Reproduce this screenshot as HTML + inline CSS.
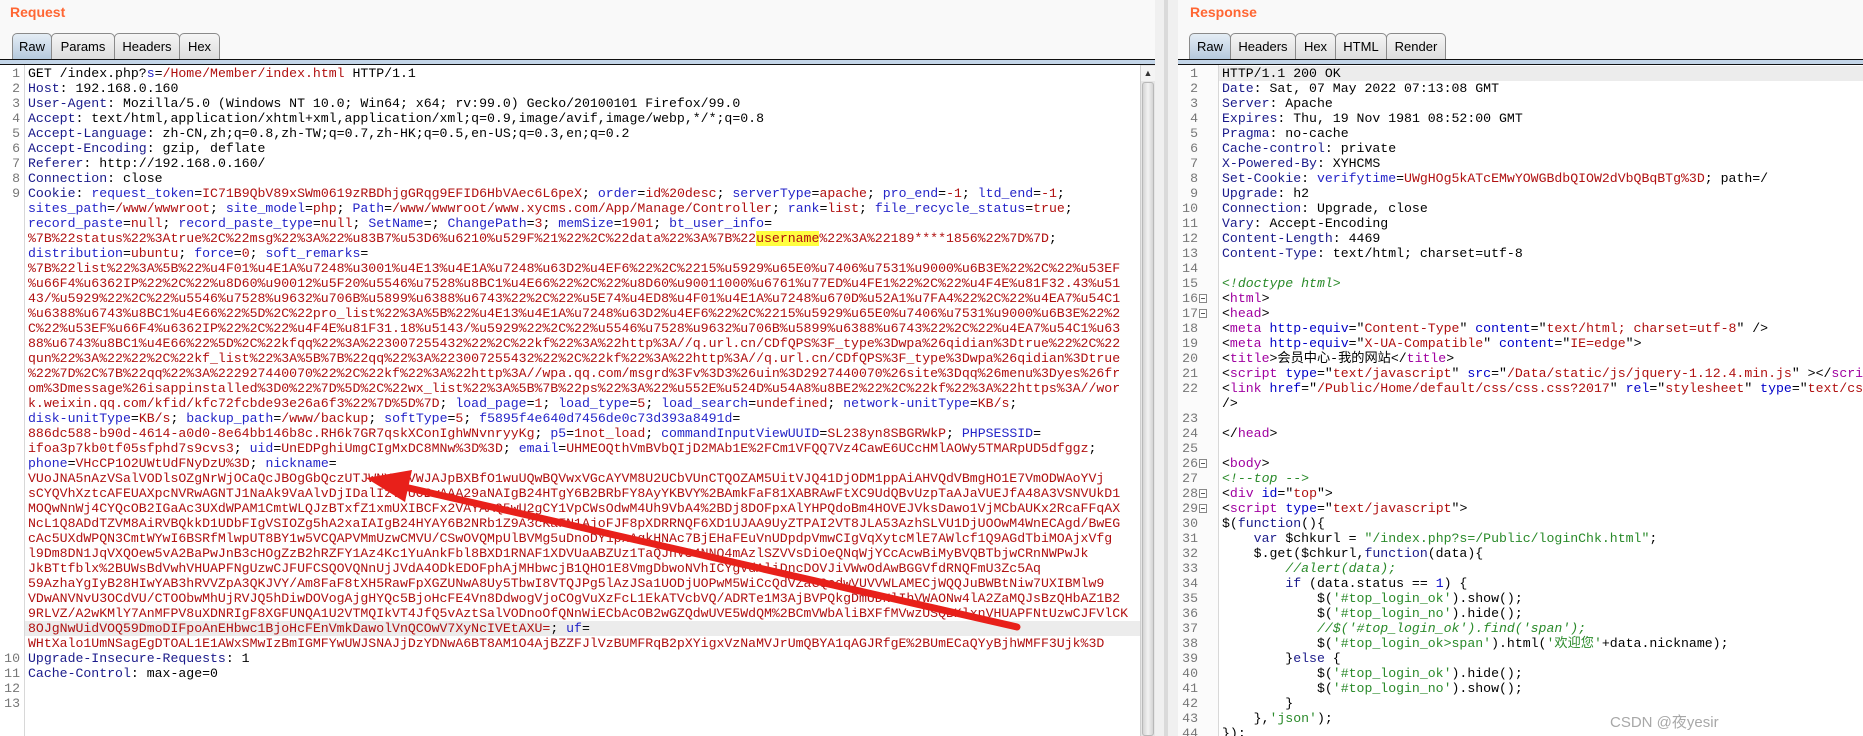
<!DOCTYPE html>
<html><head><meta charset="utf-8">
<style>
*{box-sizing:border-box}
body{margin:0;width:1863px;height:736px;overflow:hidden;background:#f9f9f9;position:relative;font-family:"Liberation Mono","Noto Sans CJK SC",monospace}
.title{position:absolute;top:4px;font:bold 14px "Liberation Sans",sans-serif;color:#ff6633}
.tab{position:absolute;top:33px;height:27px;border:1px solid #8a8a8a;border-bottom:none;border-radius:5px 5px 0 0;background:linear-gradient(#f6f6f6,#dcdcdc);font:13px "Liberation Sans",sans-serif;color:#000;text-align:center;line-height:25px}
.tab.a{background:linear-gradient(#e4edf5,#b4c8dc)}
.bar{position:absolute;top:59px;height:6px;border-top:1.5px solid #111;border-bottom:1px solid #111;background:#c3d5e8}
.ed{position:absolute;top:65px;bottom:0;background:#fff;overflow:hidden}
.r{position:absolute;height:15px;line-height:15px;font-size:13.2px;white-space:pre;color:#000}
.n{position:absolute;height:15px;line-height:15px;font-size:13.2px;color:#777;text-align:right}
.k{color:#1a1a8a}.c{color:#2525c8}.v{color:#b01010}.t{color:#a000a0}.g{color:#2a8a2a;font-style:italic}.s{color:#2a8a2a}.b{color:#0000c8}
.hl{background:#ececec}
.fold{position:absolute;width:8px;height:9px;border:1px solid #888;background:#fff}
.fold:after{content:"";position:absolute;left:1px;top:3px;width:4px;height:1px;background:#555}
</style></head><body>
<div class="title" style="left:10px">Request</div>
<div class="tab a" style="left:12px;width:40px">Raw</div>
<div class="tab" style="left:51px;width:64px">Params</div>
<div class="tab" style="left:114px;width:66px">Headers</div>
<div class="tab" style="left:179px;width:41px">Hex</div>
<div class="bar" style="left:0;width:1155px"></div>

<div class="title" style="left:1190px">Response</div>
<div class="tab a" style="left:1189px;width:42px">Raw</div>
<div class="tab" style="left:1230px;width:66px">Headers</div>
<div class="tab" style="left:1295px;width:41px">Hex</div>
<div class="tab" style="left:1335px;width:52px">HTML</div>
<div class="tab" style="left:1386px;width:60px">Render</div>
<div class="bar" style="left:1178px;width:685px"></div>

<div style="position:absolute;left:1155px;top:0;width:23px;height:736px;background:#f0f0f0"></div>
<div style="position:absolute;left:1164px;top:0;width:4px;height:736px;background:#dadada"></div>

<!-- Request editor -->
<div class="ed" style="left:0;width:1140px">
<div style="position:absolute;left:24px;top:0;width:1px;height:700px;background:#d8d8d8"></div>
<div class="hl" style="position:absolute;left:25px;top:556px;width:1115px;height:15px"></div>
<div class="n" style="left:0;width:20px;top:1px">1</div>
<div class="r" style="left:28px;top:1px">GET /index.php?<span class="c">s</span>=<span class="v">/Home/Member/index.html</span> HTTP/1.1</div>
<div class="n" style="left:0;width:20px;top:16px">2</div>
<div class="r" style="left:28px;top:16px"><span class="k">Host</span>: 192.168.0.160</div>
<div class="n" style="left:0;width:20px;top:31px">3</div>
<div class="r" style="left:28px;top:31px"><span class="k">User-Agent</span>: Mozilla/5.0 (Windows NT 10.0; Win64; x64; rv:99.0) Gecko/20100101 Firefox/99.0</div>
<div class="n" style="left:0;width:20px;top:46px">4</div>
<div class="r" style="left:28px;top:46px"><span class="k">Accept</span>: text/html,application/xhtml+xml,application/xml;q=0.9,image/avif,image/webp,*/*;q=0.8</div>
<div class="n" style="left:0;width:20px;top:61px">5</div>
<div class="r" style="left:28px;top:61px"><span class="k">Accept-Language</span>: zh-CN,zh;q=0.8,zh-TW;q=0.7,zh-HK;q=0.5,en-US;q=0.3,en;q=0.2</div>
<div class="n" style="left:0;width:20px;top:76px">6</div>
<div class="r" style="left:28px;top:76px"><span class="k">Accept-Encoding</span>: gzip, deflate</div>
<div class="n" style="left:0;width:20px;top:91px">7</div>
<div class="r" style="left:28px;top:91px"><span class="k">Referer</span>: http://192.168.0.160/</div>
<div class="n" style="left:0;width:20px;top:106px">8</div>
<div class="r" style="left:28px;top:106px"><span class="k">Connection</span>: close</div>
<div class="n" style="left:0;width:20px;top:121px">9</div>
<div class="r" style="left:28px;top:121px"><span class="k">Cookie</span>: <span class="c">request_token</span>=<span class="v">IC71B9QbV89xSWm0619zRBDhjgGRqg9EFID6HbVAec6L6peX</span>; <span class="c">order</span>=<span class="v">id%20desc</span>; <span class="c">serverType</span>=<span class="v">apache</span>; <span class="c">pro_end</span>=<span class="v">-1</span>; <span class="c">ltd_end</span>=<span class="v">-1</span>;</div>
<div class="r" style="left:28px;top:136px"><span class="c">sites_path</span>=<span class="v">/www/wwwroot</span>; <span class="c">site_model</span>=<span class="v">php</span>; <span class="c">Path</span>=<span class="v">/www/wwwroot/www.xycms.com/App/Manage/Controller</span>; <span class="c">rank</span>=<span class="v">list</span>; <span class="c">file_recycle_status</span>=<span class="v">true</span>;</div>
<div class="r" style="left:28px;top:151px"><span class="c">record_paste</span>=<span class="v">null</span>; <span class="c">record_paste_type</span>=<span class="v">null</span>; <span class="c">SetName</span>=; <span class="c">ChangePath</span>=<span class="v">3</span>; <span class="c">memSize</span>=<span class="v">1901</span>; <span class="c">bt_user_info</span>=</div>
<div class="r v" style="left:28px;top:166px">%7B%22status%22%3Atrue%2C%22msg%22%3A%22%u83B7%u53D6%u6210%u529F%21%22%2C%22data%22%3A%7B%22<span style="background:#ffff40">username</span>%22%3A%22189****1856%22%7D%7D<span style="color:#000">;</span></div>
<div class="r" style="left:28px;top:181px"><span class="c">distribution</span>=<span class="v">ubuntu</span>; <span class="c">force</span>=<span class="v">0</span>; <span class="c">soft_remarks</span>=</div>
<div class="r v" style="left:28px;top:196px">%7B%22list%22%3A%5B%22%u4F01%u4E1A%u7248%u3001%u4E13%u4E1A%u7248%u63D2%u4EF6%22%2C%2215%u5929%u65E0%u7406%u7531%u9000%u6B3E%22%2C%22%u53EF</div>
<div class="r v" style="left:28px;top:211px">%u66F4%u6362IP%22%2C%22%u8D60%u90012%u5F20%u5546%u7528%u8BC1%u4E66%22%2C%22%u8D60%u90011000%u6761%u77ED%u4FE1%22%2C%22%u4F4E%u81F32.43%u51</div>
<div class="r v" style="left:28px;top:226px">43/%u5929%22%2C%22%u5546%u7528%u9632%u706B%u5899%u6388%u6743%22%2C%22%u5E74%u4ED8%u4F01%u4E1A%u7248%u670D%u52A1%u7FA4%22%2C%22%u4EA7%u54C1</div>
<div class="r v" style="left:28px;top:241px">%u6388%u6743%u8BC1%u4E66%22%5D%2C%22pro_list%22%3A%5B%22%u4E13%u4E1A%u7248%u63D2%u4EF6%22%2C%2215%u5929%u65E0%u7406%u7531%u9000%u6B3E%22%2</div>
<div class="r v" style="left:28px;top:256px">C%22%u53EF%u66F4%u6362IP%22%2C%22%u4F4E%u81F31.18%u5143/%u5929%22%2C%22%u5546%u7528%u9632%u706B%u5899%u6388%u6743%22%2C%22%u4EA7%u54C1%u63</div>
<div class="r v" style="left:28px;top:271px">88%u6743%u8BC1%u4E66%22%5D%2C%22kfqq%22%3A%223007255432%22%2C%22kf%22%3A%22http%3A//q.url.cn/CDfQPS%3F_type%3Dwpa%26qidian%3Dtrue%22%2C%22</div>
<div class="r v" style="left:28px;top:286px">qun%22%3A%22%22%2C%22kf_list%22%3A%5B%7B%22qq%22%3A%223007255432%22%2C%22kf%22%3A%22http%3A//q.url.cn/CDfQPS%3F_type%3Dwpa%26qidian%3Dtrue</div>
<div class="r v" style="left:28px;top:301px">%22%7D%2C%7B%22qq%22%3A%222927440070%22%2C%22kf%22%3A%22http%3A//wpa.qq.com/msgrd%3Fv%3D3%26uin%3D2927440070%26site%3Dqq%26menu%3Dyes%26fr</div>
<div class="r v" style="left:28px;top:316px">om%3Dmessage%26isappinstalled%3D0%22%7D%5D%2C%22wx_list%22%3A%5B%7B%22ps%22%3A%22%u552E%u524D%u54A8%u8BE2%22%2C%22kf%22%3A%22https%3A//wor</div>
<div class="r" style="left:28px;top:331px"><span class="v">k.weixin.qq.com/kfid/kfc72fcbde93e26a6f3%22%7D%5D%7D</span>; <span class="c">load_page</span>=<span class="v">1</span>; <span class="c">load_type</span>=<span class="v">5</span>; <span class="c">load_search</span>=<span class="v">undefined</span>; <span class="c">network-unitType</span>=<span class="v">KB/s</span>;</div>
<div class="r" style="left:28px;top:346px"><span class="c">disk-unitType</span>=<span class="v">KB/s</span>; <span class="c">backup_path</span>=<span class="v">/www/backup</span>; <span class="c">softType</span>=<span class="v">5</span>; <span class="c">f5895f4e640d7456de0c73d393a8491d</span>=</div>
<div class="r" style="left:28px;top:361px"><span class="v">886dc588-b90d-4614-a0d0-8e64bb146b8c.RH6k7GR7qskXConIghWNvnryyKg</span>; <span class="c">p5</span>=<span class="v">1not_load</span>; <span class="c">commandInputViewUUID</span>=<span class="v">SL238yn8SBGRWkP</span>; <span class="c">PHPSESSID</span>=</div>
<div class="r" style="left:28px;top:376px"><span class="v">ifoa3p7kb0tf05sfphd7s9cvs3</span>; <span class="c">uid</span>=<span class="v">UnEDPghiUmgCIgMxDC8MNw%3D%3D</span>; <span class="c">email</span>=<span class="v">UHMEOQthVmBVbQIjD2MAb1E%2FCm1VFQQ7Vz4CawE6UCcHMlAOWy5TMARpUD5dfggz</span>;</div>
<div class="r" style="left:28px;top:391px"><span class="c">phone</span>=<span class="v">VHcCP1O2UWtUdFNyDzU%3D</span>; <span class="c">nickname</span>=</div>
<div class="r v" style="left:28px;top:406px">VUoJNA5nAzVSalVODlsOZgNrWjOCaQcJBOgGbQczUTJWNYChVWJAJpBXBfO1wuUQwBQVwxVGcAYVM8U2UCbVUnCTQOZAM5UitVJQ41DjODM1ppAiAHVQdVBmgHO1E7VmODWAoYVj</div>
<div class="r v" style="left:28px;top:421px">sCYQVhXztcAFEUAXpcNVRwAGNTJ1NaAk9VaAlvDjIDalIzVTUOBwAAA29aNAIgB24HTgY6B2BRbFY8AyYKBVY%2BAmkFaF81XABRAwFtXC9UdQBvUzpTaAJaVUEJfA48A3VSNVUkD1</div>
<div class="r v" style="left:28px;top:436px">MOQwNnWj4CYQcOB2IGaAc3UXdWPAM1CmtWLQJzBTxfZ1xmUXIBCFx2VAYAAQ5wU2gCY1VpCWsOdwM4Uh9VbA4%2BDj8DOFpxAlYHPQdoBm4HOVEJVksDawo1VjMCbAUKx2RcaFFqAX</div>
<div class="r v" style="left:28px;top:451px">NcL1Q8ADdTZVM8AiRVBQkkD1UDbFIgVSIOZg5hA2xaIAIgB24HYAY6B2NRb1Z9A3cKaFN1AjoFJF8pXDRRNQF6XD1UJAA9UyZTPAI2VT8JLA53AzhSLVU1DjUOOwM4WnECAgd/BwEG</div>
<div class="r v" style="left:28px;top:466px">cAc5UXdWPQN3CmtWYwI6BSRfMlwpUT8BY1w5VCQAPVMmUzwCMVU/CSwOVQMpUlBVMg5uDnoDY1pxAgkHNAc7BjEHaFEuVnUDpdpVmwCIgVqXytcMlE7AWlcf1Q9AGdTbiMOAjxVfg</div>
<div class="r v" style="left:28px;top:481px">l9Dm8DN1JqVXQOew5vA2BaPwJnB3cHOgZzB2hRZFY1Az4Kc1YuAnkFbl8BXD1RNAF1XDVUaABZUz1TaQJhVS4NNQ4mAzlSZVVsDiOeQNqWjYCcAcwBiMyBVQBTbjwCRnNWPwJk</div>
<div class="r v" style="left:28px;top:496px">JkBTtfblx%2BUWsBdVwhVHUAPFNgUzwCJFUFCSQOVQNnUjJVdA4ODkEDOFphAjMHbwcjB1QHO1E8VmgDbwoNVhICYgVdAliDncDOVJiVWwOdAwBGGVfdRNQFmU3Zc5Aq</div>
<div class="r v" style="left:28px;top:511px">59AzhaYgIyB28HIwYAB3hRVVZpA3QKJVY/Am8FaF8tXH5RawFpXGZUNwA8Uy5TbwI8VTQJPg5lAzJSa1UODjUOPwM5WiCcQdVZaGQcdwVUVVWLAMECjWQQJuBWBtNiw7UXIBMlw9</div>
<div class="r v" style="left:28px;top:526px">VDwANVNvU3OCdVU/CTOObwMhUjRVJQ5hDiwDOVogAjgHYQc5BjoHcFE4Vn8DdwogVjoCOgVuXzFcL1EkATVcbVQ/ADRTe1M3AjBVPQkgDmUDNlIhVWAONw4lA2ZaMQJsBzQHbAZ1B2</div>
<div class="r v" style="left:28px;top:541px">9RLVZ/A2wKMlY7AnMFPV8uXDNRIgF8XGFUNQA1U2VTMQIkVT4JfQ5vAztSalVODnoOfQNnWiECbAcOB2wGZQdwUVE5WdQM%2BCmVWbAliBXFfMVwzUSQBKlxnVHUAPFNtUzwCJFVlCK</div>
<div class="r" style="left:28px;top:556px"><span class="v">8OJgNwUidVOQ59DmoDIFpoAnEHbwc1BjoHcFEnVmkDawolVnQCOwV7XyNcIVEtAXU=</span>; <span class="c">uf</span>=</div>
<div class="r v" style="left:28px;top:571px">WHtXalo1UmNSagEgDTOAL1E1AWxSMwIzBmIGMFYwUWJSNAJjDzYDNwA6BT8AM1O4AjBZZFJlVzBUMFRqB2pXYigxVzNaMVJrUmQBYA1qAGJRfgE%2BUmECaQYyBjhWMFF3Ujk%3D</div>
<div class="n" style="left:0;width:20px;top:586px">10</div>
<div class="r" style="left:28px;top:586px"><span class="k">Upgrade-Insecure-Requests</span>: 1</div>
<div class="n" style="left:0;width:20px;top:601px">11</div>
<div class="r" style="left:28px;top:601px"><span class="k">Cache-Control</span>: max-age=0</div>
<div class="n" style="left:0;width:20px;top:616px">12</div>
<div class="n" style="left:0;width:20px;top:631px">13</div>
</div>
<!-- scrollbar -->
<div style="position:absolute;left:1140px;top:65px;width:15px;height:671px;background:#e6e6e6;border-left:1px solid #cfcfcf"></div>
<div style="position:absolute;left:1141px;top:66px;width:14px;height:15px;background:#f4f4f4;font:9px sans-serif;text-align:center;line-height:15px;color:#333">▲</div>
<div style="position:absolute;left:1142px;top:82px;width:12px;height:654px;background:linear-gradient(90deg,#d4d4d4,#f2f2f2,#d4d4d4);border:1px solid #b8b8b8;border-radius:3px"></div>

<!-- Response editor -->
<div class="ed" style="left:1178px;width:685px">
<div style="position:absolute;left:0;top:0;width:40px;height:671px;background:#fbfbfb"></div>
<div style="position:absolute;left:40px;top:0;width:1px;height:671px;background:#d8d8d8"></div>
<div class="hl" style="position:absolute;left:41px;top:1px;width:644px;height:15px"></div>
</div>
<div id="resp" style="position:absolute;left:1178px;top:65px;width:685px;height:671px;overflow:hidden">
<div class="n" style="left:0;width:20px;top:1px">1</div><div class="r" style="left:44px;top:1px">HTTP/1.1 200 OK</div>
<div class="n" style="left:0;width:20px;top:16px">2</div><div class="r" style="left:44px;top:16px"><span class="k">Date</span>: Sat, 07 May 2022 07:13:08 GMT</div>
<div class="n" style="left:0;width:20px;top:31px">3</div><div class="r" style="left:44px;top:31px"><span class="k">Server</span>: Apache</div>
<div class="n" style="left:0;width:20px;top:46px">4</div><div class="r" style="left:44px;top:46px"><span class="k">Expires</span>: Thu, 19 Nov 1981 08:52:00 GMT</div>
<div class="n" style="left:0;width:20px;top:61px">5</div><div class="r" style="left:44px;top:61px"><span class="k">Pragma</span>: no-cache</div>
<div class="n" style="left:0;width:20px;top:76px">6</div><div class="r" style="left:44px;top:76px"><span class="k">Cache-control</span>: private</div>
<div class="n" style="left:0;width:20px;top:91px">7</div><div class="r" style="left:44px;top:91px"><span class="k">X-Powered-By</span>: XYHCMS</div>
<div class="n" style="left:0;width:20px;top:106px">8</div><div class="r" style="left:44px;top:106px"><span class="k">Set-Cookie</span>: <span class="c">verifytime</span>=<span class="v">UWgHOg5kATcEMwYOWGBdbQIOW2dVbQBqBTg%3D</span>; path=/</div>
<div class="n" style="left:0;width:20px;top:121px">9</div><div class="r" style="left:44px;top:121px"><span class="k">Upgrade</span>: h2</div>
<div class="n" style="left:0;width:20px;top:136px">10</div><div class="r" style="left:44px;top:136px"><span class="k">Connection</span>: Upgrade, close</div>
<div class="n" style="left:0;width:20px;top:151px">11</div><div class="r" style="left:44px;top:151px"><span class="k">Vary</span>: Accept-Encoding</div>
<div class="n" style="left:0;width:20px;top:166px">12</div><div class="r" style="left:44px;top:166px"><span class="k">Content-Length</span>: 4469</div>
<div class="n" style="left:0;width:20px;top:181px">13</div><div class="r" style="left:44px;top:181px"><span class="k">Content-Type</span>: text/html; charset=utf-8</div>
<div class="n" style="left:0;width:20px;top:196px">14</div>
<div class="n" style="left:0;width:20px;top:211px">15</div><div class="r g" style="left:44px;top:211px">&lt;!doctype html&gt;</div>
<div class="n" style="left:0;width:20px;top:226px">16</div><div class="fold" style="left:21px;top:229px"></div><div class="r" style="left:44px;top:226px">&lt;<span class="t">html</span>&gt;</div>
<div class="n" style="left:0;width:20px;top:241px">17</div><div class="fold" style="left:21px;top:244px"></div><div class="r" style="left:44px;top:241px">&lt;<span class="t">head</span>&gt;</div>
<div class="n" style="left:0;width:20px;top:256px">18</div><div class="r" style="left:44px;top:256px">&lt;<span class="t">meta</span> <span class="b">http-equiv</span>="<span class="v">Content-Type</span>" <span class="b">content</span>="<span class="v">text/html; charset=utf-8</span>" /&gt;</div>
<div class="n" style="left:0;width:20px;top:271px">19</div><div class="r" style="left:44px;top:271px">&lt;<span class="t">meta</span> <span class="b">http-equiv</span>="<span class="v">X-UA-Compatible</span>" <span class="b">content</span>="<span class="v">IE=edge</span>"&gt;</div>
<div class="n" style="left:0;width:20px;top:286px">20</div><div class="r" style="left:44px;top:286px">&lt;<span class="t">title</span>&gt;会员中心-我的网站&lt;/<span class="t">title</span>&gt;</div>
<div class="n" style="left:0;width:20px;top:301px">21</div><div class="r" style="left:44px;top:301px">&lt;<span class="t">script</span> <span class="b">type</span>="<span class="v">text/javascript</span>" <span class="b">src</span>="<span class="v">/Data/static/js/jquery-1.12.4.min.js</span>" &gt;&lt;/<span class="t">script</span>&gt;</div>
<div class="n" style="left:0;width:20px;top:316px">22</div><div class="r" style="left:44px;top:316px">&lt;<span class="t">link</span> <span class="b">href</span>="<span class="v">/Public/Home/default/css/css.css?2017</span>" <span class="b">rel</span>="<span class="v">stylesheet</span>" <span class="b">type</span>="<span class="v">text/css</span>"</div>
<div class="r" style="left:44px;top:331px">/&gt;</div>
<div class="n" style="left:0;width:20px;top:346px">23</div>
<div class="n" style="left:0;width:20px;top:361px">24</div><div class="r" style="left:44px;top:361px">&lt;/<span class="t">head</span>&gt;</div>
<div class="n" style="left:0;width:20px;top:376px">25</div>
<div class="n" style="left:0;width:20px;top:391px">26</div><div class="fold" style="left:21px;top:394px"></div><div class="r" style="left:44px;top:391px">&lt;<span class="t">body</span>&gt;</div>
<div class="n" style="left:0;width:20px;top:406px">27</div><div class="r g" style="left:44px;top:406px">&lt;!--top --&gt;</div>
<div class="n" style="left:0;width:20px;top:421px">28</div><div class="fold" style="left:21px;top:424px"></div><div class="r" style="left:44px;top:421px">&lt;<span class="t">div</span> <span class="b">id</span>="<span class="v">top</span>"&gt;</div>
<div class="n" style="left:0;width:20px;top:436px">29</div><div class="fold" style="left:21px;top:439px"></div><div class="r" style="left:44px;top:436px">&lt;<span class="t">script</span> <span class="b">type</span>="<span class="v">text/javascript</span>"&gt;</div>
<div class="n" style="left:0;width:20px;top:451px">30</div><div class="r" style="left:44px;top:451px">$(<span class="k">function</span>(){</div>
<div class="n" style="left:0;width:20px;top:466px">31</div><div class="r" style="left:44px;top:466px">    <span class="k">var</span> $chkurl = <span class="s">"/index.php?s=/Public/loginChk.html"</span>;</div>
<div class="n" style="left:0;width:20px;top:481px">32</div><div class="r" style="left:44px;top:481px">    $.get($chkurl,<span class="k">function</span>(data){</div>
<div class="n" style="left:0;width:20px;top:496px">33</div><div class="r g" style="left:44px;top:496px">        //alert(data);</div>
<div class="n" style="left:0;width:20px;top:511px">34</div><div class="r" style="left:44px;top:511px">        <span class="k">if</span> (data.status == <span class="b">1</span>) {</div>
<div class="n" style="left:0;width:20px;top:526px">35</div><div class="r" style="left:44px;top:526px">            $(<span class="s">'#top_login_ok'</span>).show();</div>
<div class="n" style="left:0;width:20px;top:541px">36</div><div class="r" style="left:44px;top:541px">            $(<span class="s">'#top_login_no'</span>).hide();</div>
<div class="n" style="left:0;width:20px;top:556px">37</div><div class="r g" style="left:44px;top:556px">            //$('#top_login_ok').find('span');</div>
<div class="n" style="left:0;width:20px;top:571px">38</div><div class="r" style="left:44px;top:571px">            $(<span class="s">'#top_login_ok&gt;span'</span>).html(<span class="s">'欢迎您'</span>+data.nickname);</div>
<div class="n" style="left:0;width:20px;top:586px">39</div><div class="r" style="left:44px;top:586px">        }<span class="k">else</span> {</div>
<div class="n" style="left:0;width:20px;top:601px">40</div><div class="r" style="left:44px;top:601px">            $(<span class="s">'#top_login_ok'</span>).hide();</div>
<div class="n" style="left:0;width:20px;top:616px">41</div><div class="r" style="left:44px;top:616px">            $(<span class="s">'#top_login_no'</span>).show();</div>
<div class="n" style="left:0;width:20px;top:631px">42</div><div class="r" style="left:44px;top:631px">        }</div>
<div class="n" style="left:0;width:20px;top:646px">43</div><div class="r" style="left:44px;top:646px">    },<span class="s">'json'</span>);</div>
<div class="n" style="left:0;width:20px;top:661px">44</div><div class="r" style="left:44px;top:661px">});</div>
</div>

<div style="position:absolute;left:1610px;top:711px;font:15px 'Liberation Sans','Noto Sans CJK SC',sans-serif;color:#a8a8a8">CSDN @夜yesir</div>

<svg style="position:absolute;left:0;top:0" width="1863" height="736">
<line x1="1017" y1="627" x2="400" y2="486" stroke="#e8201a" stroke-width="7" stroke-linecap="round"/>
<polygon points="366,478 412,470 405,502" fill="#e8201a"/>
</svg>
</body></html>
